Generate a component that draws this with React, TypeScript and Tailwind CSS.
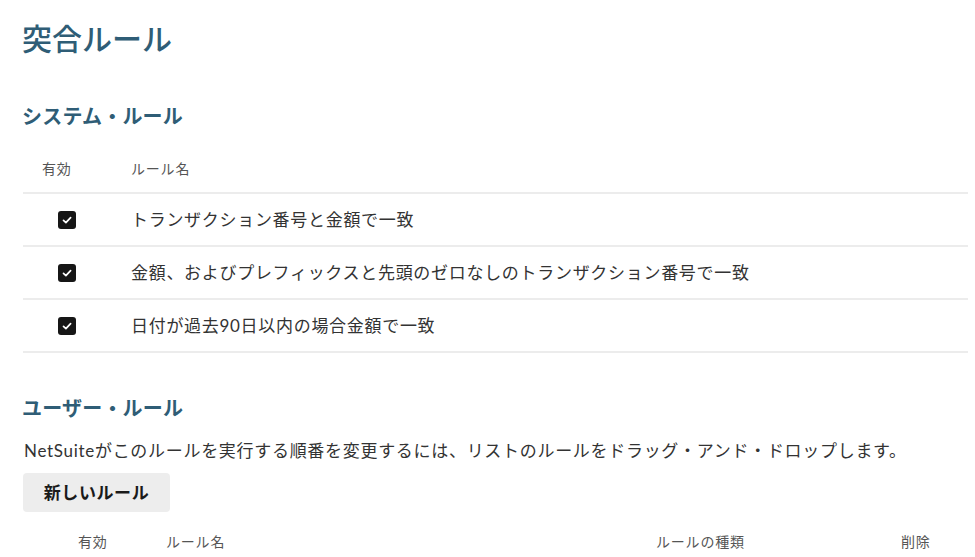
import React from "react";

const FONT = { fontFamily: "Lato, 'Noto Sans CJK JP', 'Noto Sans', sans-serif" };

function Check() {
  return (
    <div className="w-[18px] h-[18px] rounded-[3px] bg-[#161616] flex items-center justify-center">
      <svg width="12" height="12" viewBox="0 0 12 12" fill="none">
        <path d="M2.5 6.3 L4.9 8.6 L9.6 3.6" stroke="#ffffff" strokeWidth="1.7" strokeLinecap="round" strokeLinejoin="round" />
      </svg>
    </div>
  );
}

const rules = [
  "トランザクション番号と金額で一致",
  "金額、およびプレフィックスと先頭のゼロなしのトランザクション番号で一致",
  "日付が過去90日以内の場合金額で一致",
];

export default function App() {
  return (
    <div className="w-[975px] h-[557px] overflow-hidden bg-white pl-[22px] pr-[7px] pt-[18px]" style={FONT}>
      <h1 className="text-[30px] leading-[40px] font-medium text-[#2f5d76]">突合ルール</h1>

      <h2 className="mt-[44px] text-[20px] leading-[28px] font-bold text-[#2f5d76] tracking-[0.2px]">システム・ルール</h2>

      <div className="mt-[14px] ml-[1px]">
        <div className="flex items-center h-[50px] border-b-2 border-[#ececec] text-[14px] text-[#555] tracking-[0.8px]">
          <div className="w-[108px] pl-[19px]">有効</div>
          <div>ルール名</div>
        </div>
        {rules.map((r) => (
          <div key={r} className="flex items-center h-[53px] border-b-2 border-[#ececec]">
            <div className="w-[108px] pl-[35px]">
              <Check />
            </div>
            <div className="text-[17px] text-[#333] tracking-[0.7px]">{r}</div>
          </div>
        ))}
      </div>

      <h2 className="mt-[41px] text-[20px] leading-[28px] font-bold text-[#2f5d76] tracking-[0.2px]">ユーザー・ルール</h2>

      <p className="mt-[16px] ml-[2px] text-[17px] leading-[26px] text-[#333] tracking-[0.7px]">
        NetSuiteがこのルールを実行する順番を変更するには、リストのルールをドラッグ・アンド・ドロップします。
      </p>

      <button className="mt-[9px] ml-[1px] w-[147px] h-[39px] rounded-[4px] bg-[#ededed] text-[17px] font-bold text-[#1a1a1a] tracking-[0.6px] flex items-center justify-center">
        新しいルール
      </button>

      <div className="mt-[5px] ml-[1px] flex items-center h-[48px] text-[14px] text-[#555] tracking-[0.8px]">
        <div className="w-[143px] pl-[55px]">有効</div>
        <div className="w-[490px]">ルール名</div>
        <div className="w-[245px]">ルールの種類</div>
        <div>削除</div>
      </div>
    </div>
  );
}
